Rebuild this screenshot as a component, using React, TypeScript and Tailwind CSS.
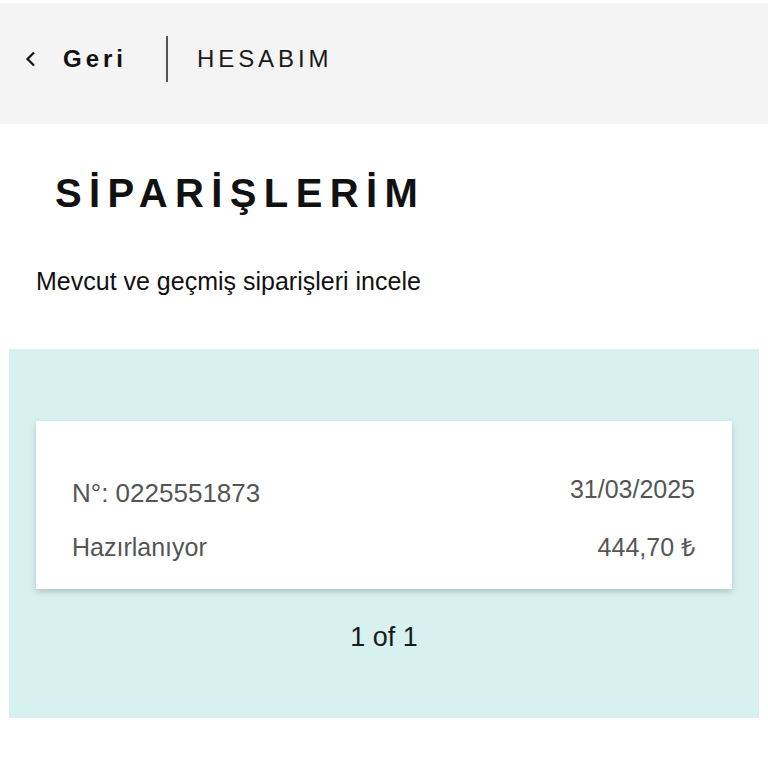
import React from "react";

export default function App() {
  return (
    <div className="w-full min-h-[768px] bg-white pt-[3px] text-[#111]" style={{ fontFamily: '"Liberation Sans", Arial, sans-serif' }}>
      <header className="h-[121px] bg-[#f4f4f4] flex items-center pl-[25px] pb-[10px]">
        <svg width="11" height="16" viewBox="0 0 11 16" className="mt-[1px]">
          <polyline points="9,1.5 2.5,8 9,14.5" fill="none" stroke="#111" strokeWidth="2.2" />
        </svg>
        <span className="ml-[27px] text-[24px] leading-none font-bold tracking-[4px]">Geri</span>
        <div className="ml-[39px] w-[2px] h-[46px] bg-[#555]" />
        <span className="ml-[29px] text-[24px] leading-none tracking-[3.9px] text-[#1a1a1a]">HESABIM</span>
      </header>
      <h1 className="mt-[49px] pl-[55px] text-[40px] leading-[40px] font-bold tracking-[7.4px]">SİPARİŞLERİM</h1>
      <p className="mt-[56px] pl-[36px] text-[25px] leading-[25px] text-[#111]">Mevcut ve geçmiş siparişleri incele</p>
      <section className="mt-[55px] mx-[9px] h-[369px] bg-[#d7f1f1] pt-[72px] px-[27px]">
        <div className="bg-white h-[168px] pt-[59px] px-[36px] shadow-[0_3px_6px_rgba(0,0,0,0.18)]">
          <div className="flex justify-between items-start text-[#555]">
            <span className="text-[26px] leading-[26px]">N°: 0225551873</span>
            <span className="text-[25px] leading-[25px] -mt-[3px] pr-[1px]">31/03/2025</span>
          </div>
          <div className="mt-[29px] flex justify-between items-start text-[#555]">
            <span className="text-[25px] leading-[25px]">Hazırlanıyor</span>
            <span className="text-[25px] leading-[25px] pr-[1px]">444,70 ₺</span>
          </div>
        </div>
        <div className="mt-[35px] text-center text-[27px] leading-[27px] text-[#1a1a1a]">1 of 1</div>
      </section>
    </div>
  );
}
